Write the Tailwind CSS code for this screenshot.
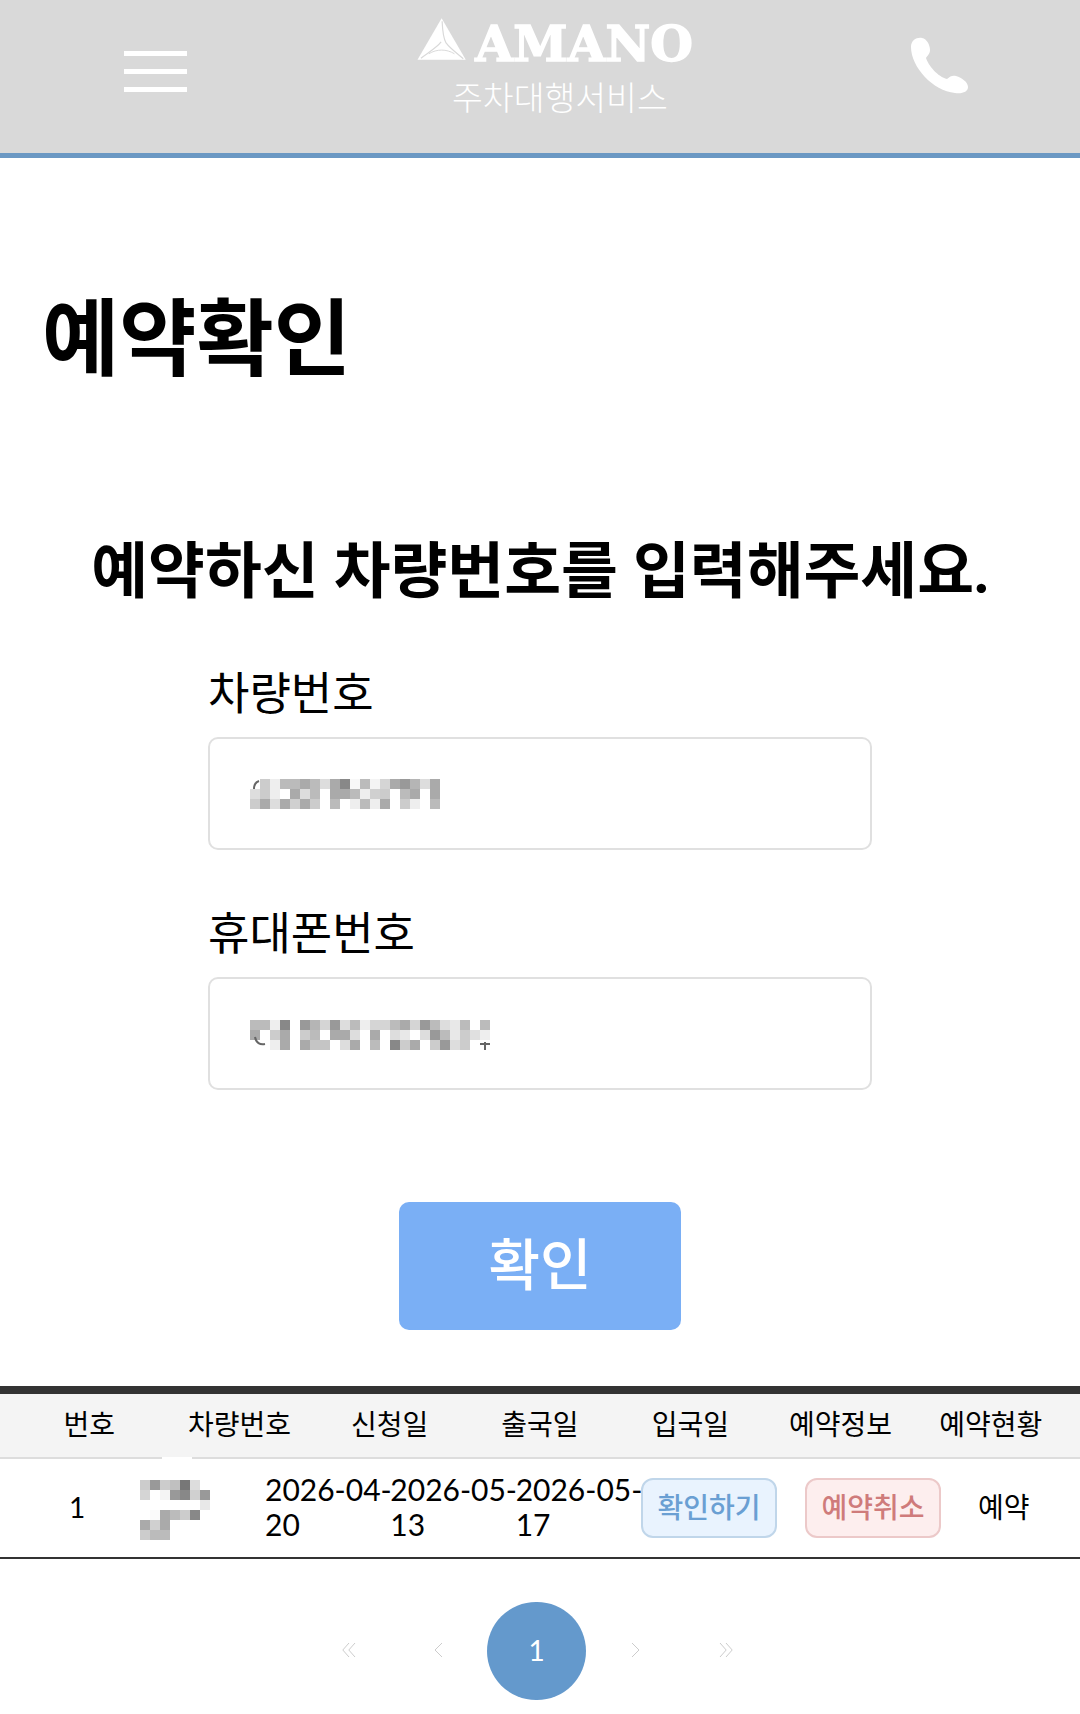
<!DOCTYPE html>
<html lang="ko">
<head>
  <meta charset="UTF-8" />
  <meta name="viewport" content="width=device-width, initial-scale=1.0"/>
  <title>AMANO 주차대행서비스</title>
  <script src="https://cdn.jsdelivr.net/npm/@tailwindcss/browser@4"></script>
</head>
<body class="h-[1714px] overflow-hidden bg-white text-black font-['Lato','Noto_Sans_CJK_KR',sans-serif]">

  <!-- 헤더 -->
  <header class="h-[158px] bg-[#d9d9d9] border-b-[5px] border-[#6b98c3] flex items-start">
    <button class="ml-[124px] mt-[51px] w-[63px] flex flex-col gap-[13px]">
      <span class="block h-[5px] bg-white"></span>
      <span class="block h-[5px] bg-white"></span>
      <span class="block h-[5px] bg-white"></span>
    </button>
    <div class="ml-[230px] w-[276px] mt-[18px]">
      <div class="flex items-end h-[44px]">
        <svg class="w-[50px] h-[42px] mb-[2px]" viewBox="0 0 50 42">
          <path d="M25 0 L49.5 42 L0.5 42 Z" fill="#fff"/>
          <path d="M25.5 3 C26 14 26.5 20 29.5 25 C33 30 41 36 47 41" fill="none" stroke="#d9d9d9" stroke-width="1.2"/>
          <path d="M24.5 24 C20 30 11 35 4 40.5" fill="none" stroke="#d9d9d9" stroke-width="1.2"/>
          <path d="M12 36 C20 31 30 31 38 36" fill="none" stroke="#d9d9d9" stroke-width="1"/>
        </svg>
        <span class="ml-[9px] mb-[-7px] text-[49px] leading-[50px] font-bold text-white font-['DejaVu_Serif',serif] [-webkit-text-stroke:1.5px_white]">AMANO</span>
      </div>
      <p class="mt-[15px] ml-[35px] text-[33.5px] leading-[40px] font-light text-white whitespace-nowrap">주차대행서비스</p>
    </div>
    <svg class="ml-[207px] mt-[25px] w-[80px] h-[80px]" viewBox="0 0 80 80">
      <path d="M11 22 C11 15 17 12 22 13 C27 14 30 20 30 25 C30 29 27 31 26 33 C28 40 38 52 47 54 C50 51 53 50 56 51 C62 53 68 57 68 62 C68 67 62 69 55 68 C33 66 11 42 11 22 Z" fill="#fff"/>
    </svg>
  </header>

  <main>
    <h1 class="mt-[131px] ml-[42px] text-[84px] leading-[96px] font-bold">예약확인</h1>
    <h2 class="mt-[149px] text-center text-[61.8px] leading-[70px] font-bold whitespace-nowrap">예약하신 차량번호를 입력해주세요.</h2>

    <form class="mt-[64px] ml-[208px] w-[664px]">
      <label class="block text-[45px] leading-[50px]">차량번호</label>
      <div class="relative mt-[19px]">
        <input type="text" class="block w-full h-[113px] rounded-[10px] border-2 border-[#e0e0e0] bg-white" />
        <svg id="plate" class="absolute left-[42px] top-[42px]" width="190" height="30"></svg>
      </div>
      <label class="block mt-[58px] text-[45px] leading-[50px]">휴대폰번호</label>
      <div class="relative mt-[19px]">
        <input type="tel" class="block w-full h-[113px] rounded-[10px] border-2 border-[#e0e0e0] bg-white" />
        <svg id="phone" class="absolute left-[42px] top-[43px] overflow-visible" width="240" height="30"></svg>
      </div>
      <button type="button" class="block mt-[112px] ml-[191px] w-[282px] h-[128px] rounded-[10px] bg-[#7aaff5] text-white text-[56px] font-medium pb-[5px]">확인</button>
    </form>

    <!-- 예약 목록 -->
    <section class="mt-[56px]">
      <div class="border-t-[8px] border-[#333] border-b-2 border-b-[#ddd] bg-[#f4f4f4] h-[73px] px-[14px] pb-[2px] grid grid-cols-7 items-center text-center text-[28px] leading-[61px]">
        <div>번호</div>
        <div>차량번호</div>
        <div>신청일</div>
        <div>출국일</div>
        <div>입국일</div>
        <div>예약정보</div>
        <div>예약현황</div>
      </div>
      <div class="h-[100px] border-b-2 border-[#333] grid grid-cols-[140px_125px_125.33px_125.33px_125.33px_164px_173px_1fr] items-center text-[28px] leading-[35px]">
        <div class="pl-[69px] pb-[2px]">1</div>
        <div class="relative h-[60px]">
          <svg id="car" class="absolute left-0 top-[2px] overflow-visible" width="85" height="60"></svg>
        </div>
        <div class="text-[30px] pb-[2px] whitespace-nowrap">2026-04-<br>20</div>
        <div class="text-[30px] pb-[2px] whitespace-nowrap">2026-05-<br>13</div>
        <div class="text-[30px] pb-[2px] whitespace-nowrap">2026-05-<br>17</div>
        <div>
          <button class="w-[136px] h-[60px] pb-[2px] rounded-[12px] border-2 border-[#c0d6ea] bg-[#e9f3fe] text-[#6a9fd3] font-medium">확인하기</button>
        </div>
        <div>
          <button class="w-[136px] h-[60px] pb-[2px] rounded-[12px] border-2 border-[#ecc9c9] bg-[#fdeeee] text-[#cf7b7b] font-medium">예약취소</button>
        </div>
        <div class="pb-[2px]">예약</div>
      </div>
    </section>

    <!-- 페이지네이션 -->
    <nav class="mt-[43px] flex items-center h-[98px]">
      <svg class="ml-[342px] mb-[2px] w-[14px] h-[14px]" viewBox="0 0 14 14" fill="none" stroke="#ccc" stroke-width="1"><path d="M7 0 L0.8 7 L7 14 M13 0 L6.8 7 L13 14"/></svg>
      <svg class="ml-[78px] mb-[2px] w-[9px] h-[14px]" viewBox="0 0 9 14" fill="none" stroke="#ccc" stroke-width="1"><path d="M8 0 L1 7 L8 14"/></svg>
      <span class="ml-[44px] w-[99px] h-[98px] pb-[3px] rounded-full bg-[#6499cc] text-white text-[28px] flex items-center justify-center">1</span>
      <svg class="ml-[45px] mb-[2px] w-[9px] h-[14px]" viewBox="0 0 9 14" fill="none" stroke="#ccc" stroke-width="1"><path d="M1 0 L8 7 L1 14"/></svg>
      <svg class="ml-[79px] mb-[2px] w-[14px] h-[14px]" viewBox="0 0 14 14" fill="none" stroke="#ccc" stroke-width="1"><path d="M1 0 L7.2 7 L1 14 M7 0 L13.2 7 L7 14"/></svg>
    </nav>
  </main>

  <script>
    // 개인정보 모자이크 (회색 10px 칸)
    function mosaic(id, rows, extra) {
      const svg = document.getElementById(id);
      let out = "";
      rows.forEach((row, y) => {
        row.split(" ").forEach((c, x) => {
          if (c !== "-") out += `<rect x="${x * 10}" y="${y * 10}" width="10" height="10" fill="#${c}"/>`;
        });
      });
      svg.innerHTML = out + (extra || "");
    }

    mosaic("plate", [
      "- ccc eee bbb bbb aaa bbb ddd aaa 888 f8f8f8 bbb f4f4f4 d5d5d5 aaa 999 b5b5b5 ddd aaa",
      "ddd ccc eee - aaa ddd bbb - aaa aaa bbb eee d0d0d0 ccc - bbb aaa - aaa",
      "ccc aaa ddd aaa d0d0d0 aaa ccc - bbb - eee bbb eee aaa - ccc eee - bbb"
    ], '<path d="M4 10 C4 6 6 3 9 2" fill="none" stroke="#666" stroke-width="2"/>');

    mosaic("phone", [
      "bbb bbb eee 888 - 999 b5b5b5 d5d5d5 999 ddd bbb eee d5d5d5 d5d5d5 bbb aaa d5d5d5 999 bbb ddd e8e8e8 bbb - bbb",
      "aaa - ccc aaa - ccc bbb - aaa aaa ddd - aaa - ddd e8e8e8 - ddd 999 bbb e8e8e8 ccc e0e0e0 eee",
      "- - eee aaa - aaa c5c5c5 c5c5c5 - ddd aaa - bbb - 888 ccc aaa - ccc 999 ddd ccc - -"
    ], '<path d="M5 17 C6 23 10 25 15 24 M235 22 L235 30 M230 24 L240 24" fill="none" stroke="#666" stroke-width="2"/>');

    mosaic("car", [
      "ccc 999 ccc c0c0c0 777 ddd",
      "d5d5d5 - f4f4f4 999 888 d0d0d0 999",
      "- - - - - - e8e8e8",
      "- fafafa aaa bbb ccc 888",
      "aaa d0d0d0 aaa",
      "ccc bbb bbb"
    ], '<rect x="22" y="-23" width="30" height="3" fill="#fff"/>');
  </script>
</body>
</html>
